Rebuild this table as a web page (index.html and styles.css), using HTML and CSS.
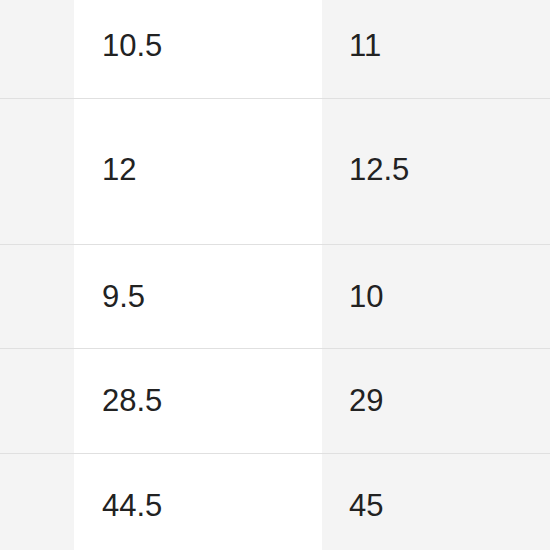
FILE: index.html
```html
<!DOCTYPE html>
<html>
<head>
<meta charset="utf-8">
<link rel="stylesheet" href="styles.css">
</head>
<body>
<div class="table">
  <div class="row r1"><div class="cell c1"></div><div class="cell c2">10.5</div><div class="cell c3">11</div></div>
  <div class="row r2"><div class="cell c1"></div><div class="cell c2">12</div><div class="cell c3">12.5</div></div>
  <div class="row r3"><div class="cell c1"></div><div class="cell c2">9.5</div><div class="cell c3">10</div></div>
  <div class="row r4"><div class="cell c1"></div><div class="cell c2">28.5</div><div class="cell c3">29</div></div>
  <div class="row r5"><div class="cell c1"></div><div class="cell c2">44.5</div><div class="cell c3">45</div></div>
</div>
</body>
</html>
```
FILE: styles.css
```css
html, body {
  margin: 0;
  padding: 0;
  background: #ffffff;
}
body {
  font-family: "Liberation Sans", Arial, sans-serif;
  color: #222222;
  overflow: hidden;
}
.table {
  width: 550px;
  display: flex;
  flex-direction: column;
}
.row {
  display: grid;
  grid-template-columns: 74px 248px 1fr;
  border-bottom: 1px solid #e0e0e0;
  box-sizing: border-box;
}
.cell {
  display: flex;
  align-items: center;
  font-size: 31px;
  line-height: 36px;
  padding-left: 28px;
}
.c1 { background: #f4f4f4; padding-left: 0; }
.c2 { background: #ffffff; }
.c3 { background: #f4f4f4; padding-left: 27px; }
.r1 { height: 99px; }
.r1 .cell { padding-bottom: 6px; }
.r2 { height: 146px; }
.r2 .cell { padding-bottom: 3px; }
.r3 { height: 104px; }
.r4 { height: 105px; }
.r5 { height: 104px; }
```
